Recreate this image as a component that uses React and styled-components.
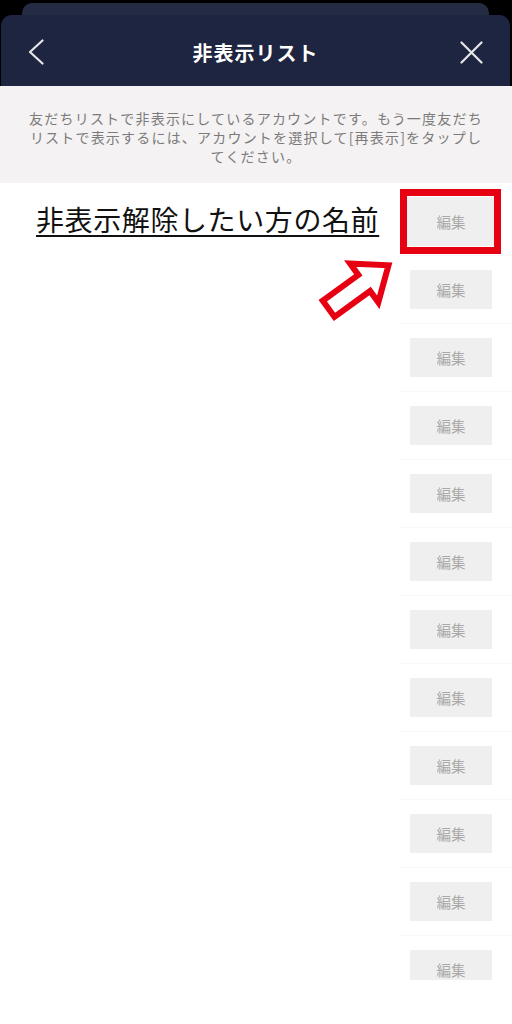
import styled, { createGlobalStyle } from "styled-components";

const GlobalStyle = createGlobalStyle`
  html, body {
    margin: 0;
    padding: 0;
    background: #ffffff;
  }
  * {
    box-sizing: border-box;
  }
`;

const Screen = styled.div`
  width: 512px;
  height: 1024px;
  overflow: hidden;
  background: #ffffff;
  font-family: "Noto Sans CJK JP", "Noto Sans", sans-serif;
`;

const Stage = styled.div`
  background: #000000;
  padding-top: 3px;
`;

const BackCard = styled.div`
  height: 16px;
  margin: 0 23px 0 22px;
  border-radius: 10px 10px 0 0;
  background: #252b43;
`;

const Header = styled.div`
  position: relative;
  margin: -4px 2px 0 1px;
  height: 71px;
  padding: 0 27px;
  border-radius: 11px 11px 0 0;
  background: #1e2540;
  display: grid;
  grid-template-columns: 40px 1fr 40px;
  align-items: center;
`;

const IconButton = styled.div`
  display: flex;
  align-items: center;
  justify-content: ${({ $end }) => ($end ? "flex-end" : "flex-start")};
  padding-top: ${({ $end }) => ($end ? "4px" : "3px")};
`;

const Title = styled.div`
  text-align: center;
  color: #ffffff;
  font-size: 20px;
  font-weight: 700;
  letter-spacing: 1px;
  padding-top: 3px;
`;

const Notice = styled.div`
  background: #f4f2f2;
  height: 97px;
  padding-top: 23px;
  text-align: center;
  color: #7b7b7b;
  font-size: 14px;
  line-height: 19px;
  letter-spacing: 1.2px;
`;

const List = styled.div`
  height: 797px;
  padding-top: 5px;
  overflow: hidden;
`;

const Row = styled.div`
  position: relative;
  height: 68px;
  display: flex;
  align-items: flex-start;
  padding-top: 14px;
  &::after {
    content: "";
    position: absolute;
    left: 400px;
    right: 0;
    bottom: 0;
    height: 1px;
    background: #f8f8f8;
  }
`;

const Name = styled.div`
  flex: 1;
  padding-left: 36px;
  margin-top: 1px;
  color: #111111;
  font-size: 28px;
  line-height: 32px;
  letter-spacing: 0.6px;
  text-decoration: underline;
  text-decoration-thickness: 2px;
  text-underline-offset: 4px;
  white-space: nowrap;
`;

const Spacer = styled.div`
  flex: 1;
`;

const EditButton = styled.div`
  position: relative;
  width: 82px;
  height: 39px;
  margin-right: 20px;
  background: #efefef;
  color: #a9a9a9;
  font-size: 14.5px;
  display: flex;
  align-items: center;
  justify-content: center;
  box-shadow: ${({ $highlight }) => ($highlight ? "0 0 0 5px #efefef" : "none")};
`;

const Highlight = styled.span`
  position: absolute;
  top: -13px;
  bottom: -13px;
  left: -10px;
  right: -9px;
  border: 7px solid #e60012;
`;

const Pointer = styled.svg`
  position: absolute;
  left: 310px;
  top: 62px;
  width: 95px;
  height: 85px;
  pointer-events: none;
`;

function ChevronLeft() {
  return (
    <svg width="16" height="26" viewBox="0 0 16 26">
      <polyline
        points="14.5,1.5 2,13 14.5,24.5"
        fill="none"
        stroke="#e6e6e6"
        strokeWidth="2.2"
        strokeLinecap="round"
        strokeLinejoin="round"
      />
    </svg>
  );
}

function CloseIcon() {
  return (
    <svg width="23" height="23" viewBox="0 0 23 23">
      <path
        d="M1.5 1.5 L21.5 21.5 M21.5 1.5 L1.5 21.5"
        fill="none"
        stroke="#e6e6e6"
        strokeWidth="2.2"
        strokeLinecap="round"
      />
    </svg>
  );
}

function App() {
  const rows = Array.from({ length: 12 }, (_, i) => i);

  return (
    <Screen>
      <GlobalStyle />
      <Stage>
        <BackCard />
        <Header>
          <IconButton>
            <ChevronLeft />
          </IconButton>
          <Title>非表示リスト</Title>
          <IconButton $end>
            <CloseIcon />
          </IconButton>
        </Header>
      </Stage>
      <Notice>
        友だちリストで非表示にしているアカウントです。もう一度友だち
        <br />
        リストで表示するには、アカウントを選択して[再表示]をタップし
        <br />
        てください。
      </Notice>
      <List>
        {rows.map((i) =>
          i === 0 ? (
            <Row key={i}>
              <Name>非表示解除したい方の名前</Name>
              <EditButton $highlight>
                編集
                <Highlight />
              </EditButton>
              <Pointer viewBox="0 0 95 85">
                <g transform="translate(17 60) rotate(-36)">
                  <polygon
                    points="2,-10 46,-10 46,-24 76,0 46,24 46,10 2,10"
                    fill="#ffffff"
                    stroke="#e60012"
                    strokeWidth="6"
                    strokeLinejoin="miter"
                  />
                </g>
              </Pointer>
            </Row>
          ) : (
            <Row key={i}>
              <Spacer />
              <EditButton>編集</EditButton>
            </Row>
          )
        )}
      </List>
    </Screen>
  );
}

export default App;
